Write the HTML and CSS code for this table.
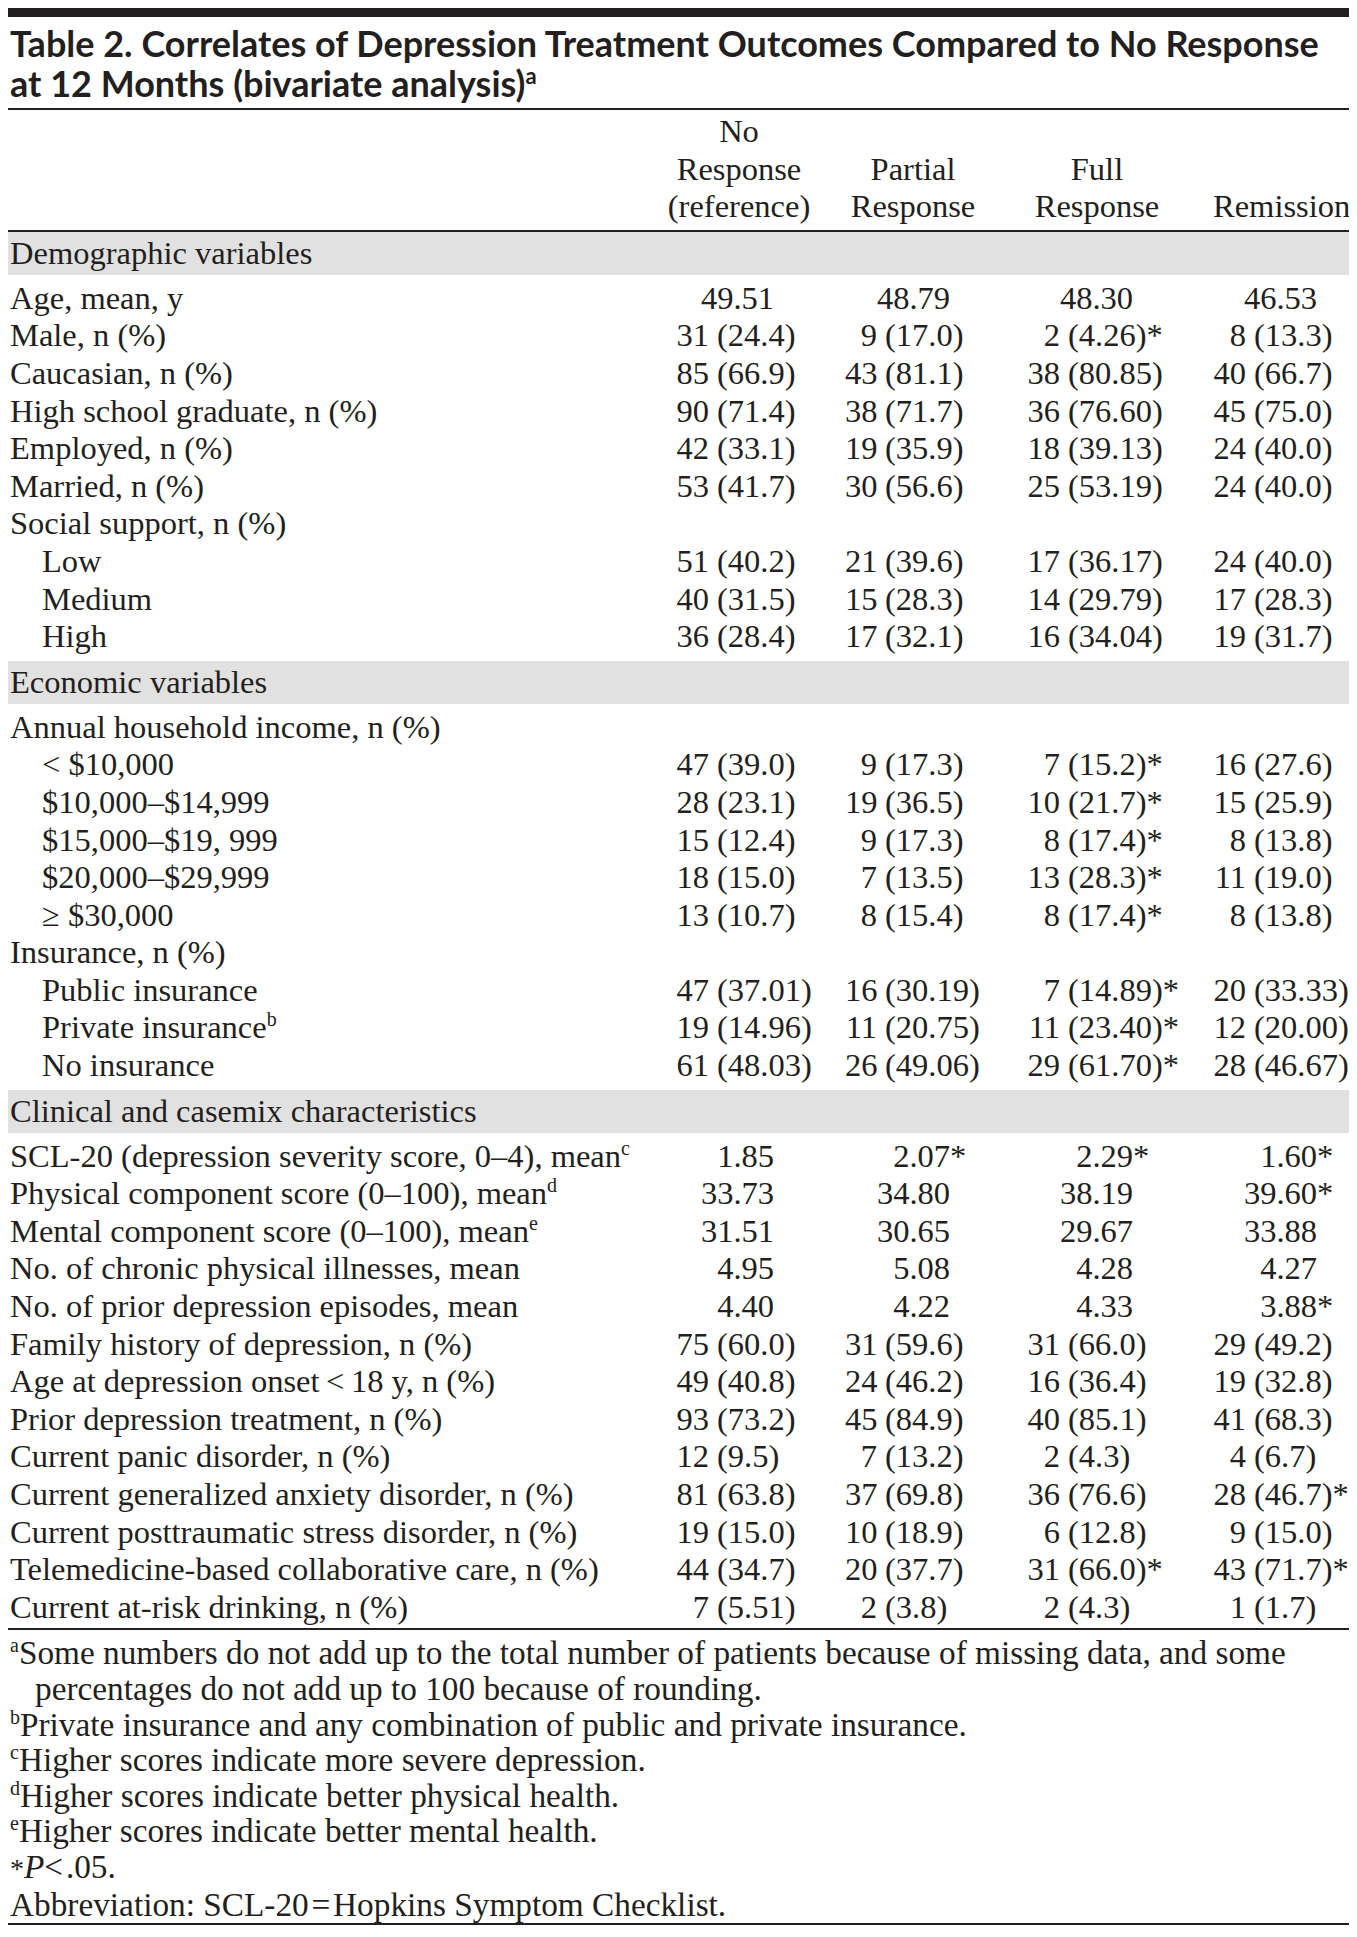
FILE: index.html
```html
<!DOCTYPE html>
<html lang="en">
<head>
<meta charset="utf-8">
<title>Table 2</title>
<link rel="stylesheet" href="styles.css">
</head>
<body>
<div class="page">
  <h1 class="title">Table 2. Correlates of Depression Treatment Outcomes Compared to No Response<br>at 12 Months (bivariate analysis)<sup>a</sup></h1>

  <div class="row head">
    <div></div>
    <div class="h">No<br>Response<br>(reference)</div>
    <div class="h">Partial<br>Response</div>
    <div class="h">Full<br>Response</div>
    <div class="h">Remission</div>
  </div>

  <div class="band">Demographic variables</div>
  <div class="group">
    <div class="row"><div class="lab">Age, mean, y</div><div class="v"><span class="m">49.51</span></div><div class="v"><span class="m">48.79</span></div><div class="v"><span class="m">48.30</span></div><div class="v"><span class="m">46.53</span></div></div>
    <div class="row"><div class="lab">Male, n (%)</div><div class="v"><span class="n">31</span><span>(24.4)</span></div><div class="v"><span class="n">9</span><span>(17.0)</span></div><div class="v"><span class="n">2</span><span>(4.26)*</span></div><div class="v"><span class="n">8</span><span>(13.3)</span></div></div>
    <div class="row"><div class="lab">Caucasian, n (%)</div><div class="v"><span class="n">85</span><span>(66.9)</span></div><div class="v"><span class="n">43</span><span>(81.1)</span></div><div class="v"><span class="n">38</span><span>(80.85)</span></div><div class="v"><span class="n">40</span><span>(66.7)</span></div></div>
    <div class="row"><div class="lab">High school graduate, n (%)</div><div class="v"><span class="n">90</span><span>(71.4)</span></div><div class="v"><span class="n">38</span><span>(71.7)</span></div><div class="v"><span class="n">36</span><span>(76.60)</span></div><div class="v"><span class="n">45</span><span>(75.0)</span></div></div>
    <div class="row"><div class="lab">Employed, n (%)</div><div class="v"><span class="n">42</span><span>(33.1)</span></div><div class="v"><span class="n">19</span><span>(35.9)</span></div><div class="v"><span class="n">18</span><span>(39.13)</span></div><div class="v"><span class="n">24</span><span>(40.0)</span></div></div>
    <div class="row"><div class="lab">Married, n (%)</div><div class="v"><span class="n">53</span><span>(41.7)</span></div><div class="v"><span class="n">30</span><span>(56.6)</span></div><div class="v"><span class="n">25</span><span>(53.19)</span></div><div class="v"><span class="n">24</span><span>(40.0)</span></div></div>
    <div class="row"><div class="lab">Social support, n (%)</div><div></div><div></div><div></div><div></div></div>
    <div class="row"><div class="lab ind">Low</div><div class="v"><span class="n">51</span><span>(40.2)</span></div><div class="v"><span class="n">21</span><span>(39.6)</span></div><div class="v"><span class="n">17</span><span>(36.17)</span></div><div class="v"><span class="n">24</span><span>(40.0)</span></div></div>
    <div class="row"><div class="lab ind">Medium</div><div class="v"><span class="n">40</span><span>(31.5)</span></div><div class="v"><span class="n">15</span><span>(28.3)</span></div><div class="v"><span class="n">14</span><span>(29.79)</span></div><div class="v"><span class="n">17</span><span>(28.3)</span></div></div>
    <div class="row"><div class="lab ind">High</div><div class="v"><span class="n">36</span><span>(28.4)</span></div><div class="v"><span class="n">17</span><span>(32.1)</span></div><div class="v"><span class="n">16</span><span>(34.04)</span></div><div class="v"><span class="n">19</span><span>(31.7)</span></div></div>
  </div>

  <div class="band">Economic variables</div>
  <div class="group">
    <div class="row"><div class="lab">Annual household income, n (%)</div><div></div><div></div><div></div><div></div></div>
    <div class="row"><div class="lab ind">&lt; $10,000</div><div class="v"><span class="n">47</span><span>(39.0)</span></div><div class="v"><span class="n">9</span><span>(17.3)</span></div><div class="v"><span class="n">7</span><span>(15.2)*</span></div><div class="v"><span class="n">16</span><span>(27.6)</span></div></div>
    <div class="row"><div class="lab ind">$10,000–$14,999</div><div class="v"><span class="n">28</span><span>(23.1)</span></div><div class="v"><span class="n">19</span><span>(36.5)</span></div><div class="v"><span class="n">10</span><span>(21.7)*</span></div><div class="v"><span class="n">15</span><span>(25.9)</span></div></div>
    <div class="row"><div class="lab ind">$15,000–$19, 999</div><div class="v"><span class="n">15</span><span>(12.4)</span></div><div class="v"><span class="n">9</span><span>(17.3)</span></div><div class="v"><span class="n">8</span><span>(17.4)*</span></div><div class="v"><span class="n">8</span><span>(13.8)</span></div></div>
    <div class="row"><div class="lab ind">$20,000–$29,999</div><div class="v"><span class="n">18</span><span>(15.0)</span></div><div class="v"><span class="n">7</span><span>(13.5)</span></div><div class="v"><span class="n">13</span><span>(28.3)*</span></div><div class="v"><span class="n">11</span><span>(19.0)</span></div></div>
    <div class="row"><div class="lab ind">≥ $30,000</div><div class="v"><span class="n">13</span><span>(10.7)</span></div><div class="v"><span class="n">8</span><span>(15.4)</span></div><div class="v"><span class="n">8</span><span>(17.4)*</span></div><div class="v"><span class="n">8</span><span>(13.8)</span></div></div>
    <div class="row"><div class="lab">Insurance, n (%)</div><div></div><div></div><div></div><div></div></div>
    <div class="row"><div class="lab ind">Public insurance</div><div class="v"><span class="n">47</span><span>(37.01)</span></div><div class="v"><span class="n">16</span><span>(30.19)</span></div><div class="v"><span class="n">7</span><span>(14.89)*</span></div><div class="v"><span class="n">20</span><span>(33.33)</span></div></div>
    <div class="row"><div class="lab ind">Private insurance<sup>b</sup></div><div class="v"><span class="n">19</span><span>(14.96)</span></div><div class="v"><span class="n">11</span><span>(20.75)</span></div><div class="v"><span class="n">11</span><span>(23.40)*</span></div><div class="v"><span class="n">12</span><span>(20.00)</span></div></div>
    <div class="row"><div class="lab ind">No insurance</div><div class="v"><span class="n">61</span><span>(48.03)</span></div><div class="v"><span class="n">26</span><span>(49.06)</span></div><div class="v"><span class="n">29</span><span>(61.70)*</span></div><div class="v"><span class="n">28</span><span>(46.67)</span></div></div>
  </div>

  <div class="band">Clinical and casemix characteristics</div>
  <div class="group last">
    <div class="row"><div class="lab">SCL-20 (depression severity score, 0–4), mean<sup>c</sup></div><div class="v"><span class="m">1.85</span></div><div class="v"><span class="m">2.07</span>*</div><div class="v"><span class="m">2.29</span>*</div><div class="v"><span class="m">1.60</span>*</div></div>
    <div class="row"><div class="lab">Physical component score (0–100), mean<sup>d</sup></div><div class="v"><span class="m">33.73</span></div><div class="v"><span class="m">34.80</span></div><div class="v"><span class="m">38.19</span></div><div class="v"><span class="m">39.60</span>*</div></div>
    <div class="row"><div class="lab">Mental component score (0–100), mean<sup>e</sup></div><div class="v"><span class="m">31.51</span></div><div class="v"><span class="m">30.65</span></div><div class="v"><span class="m">29.67</span></div><div class="v"><span class="m">33.88</span></div></div>
    <div class="row"><div class="lab">No. of chronic physical illnesses, mean</div><div class="v"><span class="m">4.95</span></div><div class="v"><span class="m">5.08</span></div><div class="v"><span class="m">4.28</span></div><div class="v"><span class="m">4.27</span></div></div>
    <div class="row"><div class="lab">No. of prior depression episodes, mean</div><div class="v"><span class="m">4.40</span></div><div class="v"><span class="m">4.22</span></div><div class="v"><span class="m">4.33</span></div><div class="v"><span class="m">3.88</span>*</div></div>
    <div class="row"><div class="lab">Family history of depression, n (%)</div><div class="v"><span class="n">75</span><span>(60.0)</span></div><div class="v"><span class="n">31</span><span>(59.6)</span></div><div class="v"><span class="n">31</span><span>(66.0)</span></div><div class="v"><span class="n">29</span><span>(49.2)</span></div></div>
    <div class="row"><div class="lab">Age at depression onset&thinsp;&lt;&thinsp;18 y, n (%)</div><div class="v"><span class="n">49</span><span>(40.8)</span></div><div class="v"><span class="n">24</span><span>(46.2)</span></div><div class="v"><span class="n">16</span><span>(36.4)</span></div><div class="v"><span class="n">19</span><span>(32.8)</span></div></div>
    <div class="row"><div class="lab">Prior depression treatment, n (%)</div><div class="v"><span class="n">93</span><span>(73.2)</span></div><div class="v"><span class="n">45</span><span>(84.9)</span></div><div class="v"><span class="n">40</span><span>(85.1)</span></div><div class="v"><span class="n">41</span><span>(68.3)</span></div></div>
    <div class="row"><div class="lab">Current panic disorder, n (%)</div><div class="v"><span class="n">12</span><span>(9.5)</span></div><div class="v"><span class="n">7</span><span>(13.2)</span></div><div class="v"><span class="n">2</span><span>(4.3)</span></div><div class="v"><span class="n">4</span><span>(6.7)</span></div></div>
    <div class="row"><div class="lab">Current generalized anxiety disorder, n (%)</div><div class="v"><span class="n">81</span><span>(63.8)</span></div><div class="v"><span class="n">37</span><span>(69.8)</span></div><div class="v"><span class="n">36</span><span>(76.6)</span></div><div class="v"><span class="n">28</span><span>(46.7)*</span></div></div>
    <div class="row"><div class="lab">Current posttraumatic stress disorder, n (%)</div><div class="v"><span class="n">19</span><span>(15.0)</span></div><div class="v"><span class="n">10</span><span>(18.9)</span></div><div class="v"><span class="n">6</span><span>(12.8)</span></div><div class="v"><span class="n">9</span><span>(15.0)</span></div></div>
    <div class="row"><div class="lab">Telemedicine-based collaborative care, n (%)</div><div class="v"><span class="n">44</span><span>(34.7)</span></div><div class="v"><span class="n">20</span><span>(37.7)</span></div><div class="v"><span class="n">31</span><span>(66.0)*</span></div><div class="v"><span class="n">43</span><span>(71.7)*</span></div></div>
    <div class="row"><div class="lab">Current at-risk drinking, n (%)</div><div class="v"><span class="n">7</span><span>(5.51)</span></div><div class="v"><span class="n">2</span><span>(3.8)</span></div><div class="v"><span class="n">2</span><span>(4.3)</span></div><div class="v"><span class="n">1</span><span>(1.7)</span></div></div>
  </div>

  <div class="notes">
    <p class="fn"><sup>a</sup>Some numbers do not add up to the total number of patients because of missing data, and some<br>percentages do not add up to 100 because of rounding.</p>
    <p class="fn"><sup>b</sup>Private insurance and any combination of public and private insurance.</p>
    <p class="fn"><sup>c</sup>Higher scores indicate more severe depression.</p>
    <p class="fn"><sup>d</sup>Higher scores indicate better physical health.</p>
    <p class="fn"><sup>e</sup>Higher scores indicate better mental health.</p>
    <p class="fn"><span class="ast">*</span><i>P</i>&lt;&#8202;.05.</p>
    <p class="fn">Abbreviation: SCL-20&#8202;=&#8202;Hopkins Symptom Checklist.</p>
  </div>
</div>
</body>
</html>
```

FILE: styles.css
```css
html, body {
  background: #ffffff;
}

body {
  margin: 8px;
  font-family: "Liberation Serif", "Times New Roman", serif;
  color: #231f20;
}

.page {
  border-top: 9px solid #231f20;
}

.title {
  margin: 0;
  padding: 6px 0 5px 2px;
  font-family: Lato, "Open Sans", sans-serif;
  font-weight: 700;
  font-size: 36px;
  line-height: 40px;
  color: #231f20;
  border-bottom: 2px solid #231f20;
}

.title sup {
  font-size: 22px;
  line-height: 0;
  vertical-align: 13px;
}

.row {
  display: grid;
  grid-template-columns: 625px 212px 136px 232px 136px;
  font-size: 32.5px;
  line-height: 37.6px;
  white-space: nowrap;
}

.head {
  padding: 3px 0 4px;
  border-bottom: 2px solid #231f20;
}

.head .h {
  align-self: end;
  text-align: center;
}

.band {
  height: 43px;
  padding-left: 2px;
  background: #e1e1e1;
  font-size: 32.5px;
  line-height: 43px;
}

.group {
  padding: 5px 0;
}

.group.last {
  padding-bottom: 2px;
  border-bottom: 2px solid #231f20;
}

.lab {
  padding-left: 2px;
}

.lab.ind {
  padding-left: 34px;
}

sup {
  font-size: 20px;
  line-height: 0;
  vertical-align: 12px;
}

.v {
  display: flex;
  --pre: 84px;
  --mw: 141px;
}

.v:nth-child(3) {
  --pre: 40px;
  --mw: 105px;
}

.v:nth-child(4) {
  --pre: 87px;
  --mw: 152px;
}

.v:nth-child(5) {
  --pre: 41px;
  --mw: 104px;
}

.n {
  flex: none;
  box-sizing: border-box;
  width: var(--pre);
  padding-right: 8px;
  text-align: right;
}

.m {
  flex: none;
  width: var(--mw);
  text-align: right;
}

.notes {
  padding: 5px 0 1px;
  border-bottom: 2px solid #231f20;
  font-size: 33.3px;
  line-height: 35.6px;
}

.fn {
  margin: 0;
  padding-left: 27px;
  text-indent: -25px;
}

.fn sup {
  font-size: 20px;
  vertical-align: 12px;
}

.ast {
  font-size: 28px;
}
```
